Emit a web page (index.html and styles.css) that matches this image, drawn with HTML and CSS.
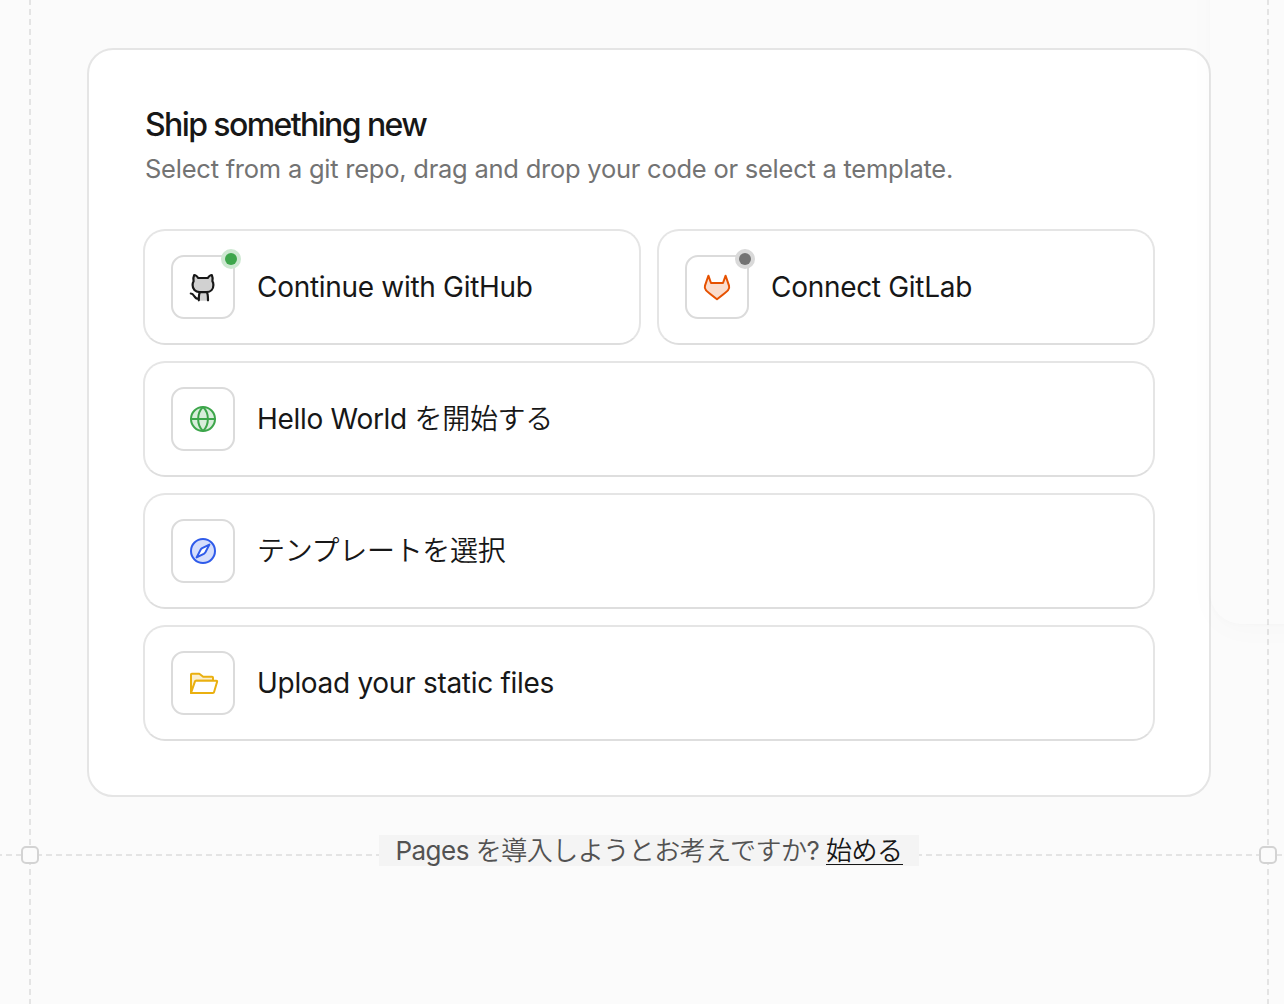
FILE: index.html
```html
<!DOCTYPE html>
<html lang="ja">
<head>
    <meta charset="utf-8">
    <meta name="viewport" content="width=device-width, initial-scale=1.0">
    <title>Ship something new</title>
    <link rel="stylesheet" href="styles.css">
</head>
<body>
    <div class="page">
        <div class="guides">
            <div class="guide-v guide-left"></div>
            <div class="guide-v guide-right"></div>
            <div class="guide-h"></div>
            <div class="node node-left"></div>
            <div class="node node-right"></div>
        </div>

        <main class="card">
            <h1 class="title">Ship something new</h1>
            <p class="subtitle">Select from a git repo, drag and drop your code or select a template.</p>

            <div class="options">
                <a class="option">
                    <span class="icon-box">
                        <svg class="icon icon-github" viewBox="0 0 32 32">
                            <path class="tint" d="M12.5 21 11.6 29.8H21L20.5 21Z"/>
                            <path class="tint line" d="M7.2 4C8.8 4 10.2 5.4 11.2 7H20.8C21.8 5.4 23.2 4 24.8 4C25.7 6 25.9 8.2 25.4 10.2C26.2 11.4 26.4 12.5 26.4 14C26.4 18 23.8 21.2 19.5 21.2H12.5C8.2 21.2 5.6 18 5.6 14C5.6 12.5 5.9 11.4 6.6 10.2C6.1 8.2 6.3 6 7.2 4Z"/>
                            <path class="line" d="M13 21.2C12 22.5 11.8 23.5 11.8 29.3M19.8 21.2C20.8 22.5 21 23.5 21 29.3M3.8 22.5C7.8 22.5 6.5 28 11.6 28"/>
                        </svg>
                        <span class="status status-connected"></span>
                    </span>
                    <span class="label">Continue with GitHub</span>
                </a>
                <a class="option">
                    <span class="icon-box">
                        <svg class="icon icon-gitlab" viewBox="0 0 32 32">
                            <path class="tint line" d="M7.4 4.7 10 12H22L24.6 4.7 28 14.6C28.4 16.2 28.2 17.8 27.2 18.9Q26.6 20 16 28.2Q5.4 20 4.8 18.9C3.8 17.8 3.6 16.2 4 14.6Z"/>
                        </svg>
                        <span class="status status-idle"></span>
                    </span>
                    <span class="label">Connect GitLab</span>
                </a>
                <a class="option option-wide">
                    <span class="icon-box">
                        <svg class="icon icon-globe" viewBox="0 0 32 32">
                            <circle class="tint line" cx="16" cy="16" r="12"/>
                            <path class="line" d="M4 16H28M16 4C9.5 10 9.5 22 16 28C22.5 22 22.5 10 16 4Z"/>
                        </svg>
                    </span>
                    <span class="label">Hello World <span class="ja">を開始する</span></span>
                </a>
                <a class="option option-wide">
                    <span class="icon-box">
                        <svg class="icon icon-compass" viewBox="0 0 32 32">
                            <circle class="tint line" cx="16" cy="16" r="12"/>
                            <path class="solid line" d="M22.4 9.6 15.2 13.2Q14.2 13.8 13.6 14.8L9.6 22.4 16.8 18.8Q17.8 18.2 18.4 17.2Z"/>
                        </svg>
                    </span>
                    <span class="label ja">テンプレートを選択</span>
                </a>
                <a class="option option-wide">
                    <span class="icon-box">
                        <svg class="icon icon-folder" viewBox="0 0 32 32">
                            <path class="tint line" d="M4 26V7.5Q4 6.7 4.8 6.7H12.3L16.2 9.8H25Q26 9.8 26 10.8V13.7H9L4 26Z"/>
                            <path class="solid line" d="M4 26 8 14.4Q8.3 13.7 9 13.7H29.2Q30.4 13.7 30.1 14.8L27 25.3Q26.8 26 26 26Z"/>
                        </svg>
                    </span>
                    <span class="label">Upload your static files</span>
                </a>
            </div>
        </main>

        <p class="footer">Pages <span class="ja">を導入しようとお考えですか</span>? <a class="footer-link ja">始める</a></p>

        <div class="side-panel"></div>
    </div>
</body>
</html>
```
FILE: styles.css
```css
* {
    box-sizing: border-box;
}

body {
    margin: 0;
    background: #fbfbfb;
    color: #171717;
    font-family: Inter, 'Noto Sans CJK JP', sans-serif;
}

.page {
    position: relative;
    height: 1004px;
    padding: 48px 73px 0 87px;
    overflow: hidden;
}

/* dashed background guides */
.guides {
    position: absolute;
    inset: 0;
}

.guide-v {
    position: absolute;
    top: -1px;
    bottom: 0;
    width: 2px;
    background: repeating-linear-gradient(to bottom, #e4e4e4 0 6px, transparent 6px 10px);
}

.guide-left {
    left: 29px;
}

.guide-right {
    left: 1267px;
}

.guide-h {
    position: absolute;
    top: 854px;
    left: -4px;
    right: 0;
    height: 2px;
    background: repeating-linear-gradient(to right, #e4e4e4 0 6px, transparent 6px 10px);
}

.node {
    position: absolute;
    top: 846px;
    width: 18px;
    height: 18px;
    border: 2px solid #d3d3d3;
    border-radius: 5px;
    background: #fbfbfb;
}

.node-left {
    left: 21px;
}

.node-right {
    left: 1259px;
}

.side-panel {
    position: absolute;
    top: -60px;
    left: 1210px;
    width: 400px;
    height: 684px;
    border-radius: 32px;
    box-shadow: 0 2px 4px rgba(0, 0, 0, 0.01), 0 6px 32px rgba(0, 0, 0, 0.018);
}

.card {
    position: relative;
    height: 749px;
    padding: 54px;
    border: 2px solid #e5e5e5;
    border-radius: 26px;
    background: #fff;
}

.title {
    margin: -1px 0 0 2px;
    font-size: 32px;
    font-weight: 500;
    line-height: 44px;
    letter-spacing: -1.6px;
}

.subtitle {
    margin: 2px 0 0 2px;
    color: #737373;
    font-size: 25.5px;
    line-height: 40px;
    letter-spacing: -0.24px;
}

.options {
    display: grid;
    grid-template-columns: 1fr 1fr;
    gap: 16px;
    margin-top: 40px;
}

.option {
    display: flex;
    align-items: center;
    gap: 22px;
    height: 116px;
    padding: 0 26px;
    border: 2px solid #e5e5e5;
    border-bottom-color: #dedede;
    border-radius: 22px;
    background: #fff;
}

.option-wide {
    grid-column: span 2;
}

.icon-box {
    position: relative;
    display: flex;
    align-items: center;
    justify-content: center;
    width: 64px;
    height: 64px;
    border: 2px solid #dbdbdb;
    border-radius: 13px;
}

.icon {
    width: 32px;
    height: 32px;
    fill: none;
}

.line {
    stroke: currentColor;
    stroke-width: 2;
    stroke-linecap: round;
    stroke-linejoin: round;
}

.tint {
    fill: currentColor;
    fill-opacity: 0.2;
}

.solid {
    fill: #fff;
}

.icon-github {
    color: #171717;
}

.icon-github .line {
    stroke-width: 2.2;
}

.icon-gitlab {
    color: #e65100;
}

.icon-globe {
    color: #3da64b;
}

.icon-compass {
    color: #2f5bea;
}

.icon-folder {
    color: #eab010;
}

.status {
    position: absolute;
    top: -8px;
    right: -8px;
    width: 20px;
    height: 20px;
    padding: 4px;
    border-radius: 50%;
}

.status::before {
    content: "";
    display: block;
    width: 12px;
    height: 12px;
    border-radius: 50%;
    background: currentColor;
}

.status-connected {
    color: #3da64b;
    background: #cde8d1;
}

.status-idle {
    color: #737373;
    background: #d9d9d9;
}

.label {
    font-size: 28px;
    line-height: 40px;
    letter-spacing: -0.3px;
}

.ja {
    font-weight: 350;
}

.footer {
    position: relative;
    width: 540px;
    height: 31px;
    margin: 38px auto 0;
    background: #f4f4f4;
    color: #525252;
    font-size: 26px;
    line-height: 32px;
    letter-spacing: -0.5px;
    text-align: center;
    white-space: nowrap;
}

.footer-link {
    display: inline-block;
    height: 30px;
    border-bottom: 1px solid #171717;
    color: #171717;
}
```
